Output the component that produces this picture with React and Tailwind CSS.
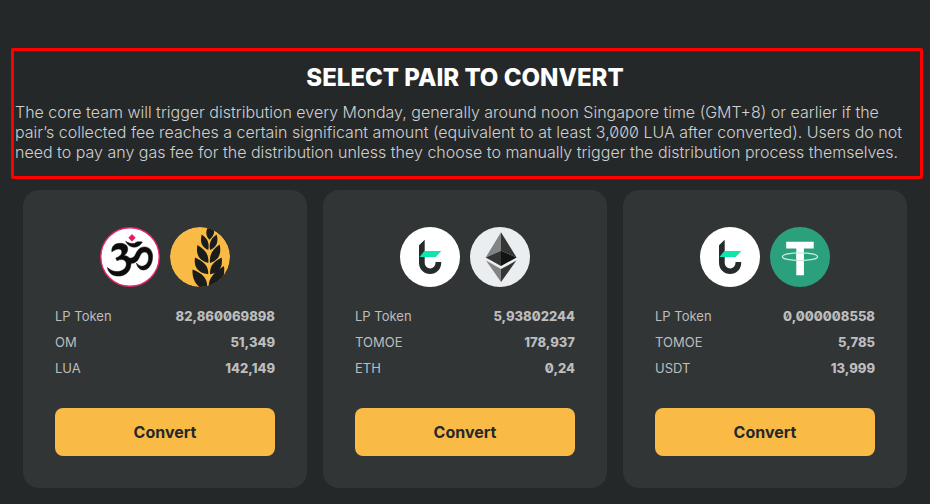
import React from 'react';

function OmIcon() {
  return (
    <svg viewBox="0 0 60 60" className="size-[60px]" role="img" aria-label="OM">
      <circle cx="30" cy="30" r="29.2" fill="#fff" stroke="#e8266f" strokeWidth="1.400" />
      <path d="M32 7.400l3.300 3.300-3.300 3.600-3.300-3.600z" fill="#e5195f" stroke="#e5195f" strokeWidth=".6" />
      <g fill="#0c0c0c" stroke="#0c0c0c" strokeWidth=".5">
        <path d="M25.600 14.300c3 1.900 6 2.600 9 2.200 1.400-1.600 3-2.100 7.800-1.500-1.800 3-4.700 5.300-8.200 5.200-3.800-.1-6.800-2.200-8.600-5.900z" />
        <path d="M11.800 24.800c-.4-5 2.400-8.400 8-8.500 5-.1 8 2.200 7.900 5.900-.1 2.800-1.500 4.900-3.900 6.300 5 .3 7.500 3.600 7.200 8.500-.5 7.300-5.400 12.100-12.700 12.100-5.600 0-9.600-2.800-11-8.600 3.500 3.300 7 4.300 10.600 4 5-.4 8.300-3.300 8.400-7.200.1-3.100-1.800-4.700-5-4.700-1.600 0-2.900.4-4.400 1.100l-1.100-2.700c3.800-1.400 6-3.500 6-6.100 0-1.700-1.200-2.900-3.200-2.800-2.600.1-4.100 1.200-6.800 2.700z" />
        <path d="M29 31c3.600.7 5.300-1 6.700-4 1.900-4.300 4.600-7.100 8.700-7.100 5.300 0 8.400 4.400 8.200 10.100-.3 7.600-4.200 13-9 13-3.700 0-6.400-2.700-7.200-7 2.200 2.600 4.400 3.700 6.800 3.100 3.100-.8 5.400-3.800 5.400-8 0-3.800-1.500-6-4-6-2.500 0-3.900 2-5.200 5.100-1.900 4.500-5.400 7.300-10.400 5.500z" />
      </g>
    </svg>
  );
}

function LuaIcon() {
  return (
    <svg viewBox="0 0 60 60" className="size-[60px] rounded-full" role="img" aria-label="LUA">
      <circle cx="30" cy="30" r="30" fill="#fabb46" />
      <g fill="#1b1d1d">
        <path d="M37.500 1c-2 4-1.500 8 1.800 11.800C43.500 9.500 45 5.500 43.500 2z" />
        <path d="M31.700 7.500c-1.800 7-.5 12.500 6.600 15.500 1.500-7-1-12-6.600-15.500z" />
        <path d="M46.700 7.500c1.800 7 .5 12.500-6.600 15.500-1.500-7 1-12 6.600-15.500z" />
        <path d="M27.500 18c-1.800 8.500.8 15.500 10.800 18 .9-8.500-3.300-13.500-10.800-18z" />
        <path d="M49.700 17.500c1.800 9-.5 15.500-9.700 18.500-.9-8.500 2.500-13.500 9.700-18.500z" />
        <path d="M25 30.500c-1.500 9 2.500 15.500 13.300 16.800.3-8.800-5-13-13.300-16.800z" />
        <path d="M51.700 30.500c1.300 9-2 15.500-11.700 16.800-.3-8.800 4-13 11.700-16.800z" />
        <path d="M22.500 42.500c-.5 7.500 2 13.500 7 17.500h7.700c.3-9.500-5.700-14-14.700-17.500z" />
        <path d="M54 39c1 8-1 15.500-5.500 21h-9.800c-.3-9.500 6-15 15.300-21z" />
      </g>
    </svg>
  );
}

function TomoIcon() {
  return (
    <svg viewBox="0 0 60 60" className="size-[60px]" role="img" aria-label="TOMOE">
      <circle cx="30" cy="30" r="30" fill="#fff" />
      <path d="M19 18.300l5.700-5.500V36a5.400 5.400 0 0 0 10.800 0v-.9h5.700v.9A11.100 11.100 0 0 1 19 36z" fill="#262b2c" />
      <path d="M24.300 24h17l-5.500 6H19.500z" fill="#0ee6ad" />
    </svg>
  );
}

function EthIcon() {
  return (
    <svg viewBox="0 0 60 60" className="size-[60px]" role="img" aria-label="ETH">
      <circle cx="30" cy="30" r="30" fill="#ebeef0" />
      <path d="M31 5.300L15.700 30.500 31 23.700z" fill="#828384" />
      <path d="M31 5.300l15.600 25.200L31 23.700z" fill="#343535" />
      <path d="M15.700 30.500L31 23.700V39z" fill="#343535" />
      <path d="M46.600 30.500L31 23.700V39z" fill="#131313" />
      <path d="M16 33.600l15 8.500V55z" fill="#828384" />
      <path d="M46.400 33.600L31 42.100V55z" fill="#343535" />
    </svg>
  );
}

function UsdtIcon() {
  return (
    <svg viewBox="0 0 60 60" className="size-[60px]" role="img" aria-label="USDT">
      <circle cx="30" cy="30" r="30" fill="#2aa17c" />
      <path d="M16.200 14.800h27.500v6.700H33.900v26.700h-7.600V21.500H16.200z" fill="#fff" />
      <ellipse cx="30" cy="29.700" rx="17.600" ry="3.900" fill="none" stroke="#c9ebe0" strokeWidth="1.300" />
      <path d="M26.300 27h7.600v4.500h-7.600z" fill="#fff" />
    </svg>
  );
}

const pairs = [
  {
    icons: [OmIcon, LuaIcon],
    rows: [['LP Token', '82,860069898'], ['OM', '51,349'], ['LUA', '142,149']],
  },
  {
    icons: [TomoIcon, EthIcon],
    rows: [['LP Token', '5,93802244'], ['TOMOE', '178,937'], ['ETH', '0,24']],
  },
  {
    icons: [TomoIcon, UsdtIcon],
    rows: [['LP Token', '0,000008558'], ['TOMOE', '5,785'], ['USDT', '13,999']],
  },
];

function PairCard({ icons, rows }) {
  return (
    <article className="rounded-2xl bg-[#323536] px-8 pt-[37px] pb-8">
      <div className="flex justify-center gap-2.5">
        {icons.map((Icon, i) => (
          <Icon key={i} />
        ))}
      </div>
      <dl className="mt-4 text-[13px] leading-[26px] text-[#bdbdbd]">
        {rows.map(([label, value]) => (
          <div key={label} className="flex justify-between">
            <dt>{label}</dt>
            <dd className="font-extrabold slashed-zero">{value}</dd>
          </div>
        ))}
      </dl>
      <button
        type="button"
        className="mt-[27px] h-12 w-full rounded-lg bg-[#fabb46] text-base font-bold text-[#252829]"
      >
        Convert
      </button>
    </article>
  );
}

export default function App() {
  return (
    <main className="min-h-screen bg-[#252829] pt-12 pb-4 font-['Inter','Liberation_Sans',sans-serif]">
      <section className="mr-[7px] ml-[11px] rounded-xs border-3 border-[#ff0000] pt-[13px] pr-[5px] pb-3.5 pl-px">
        <h1 className="text-center text-2xl leading-7 font-extrabold text-white">SELECT PAIR TO CONVERT</h1>
        <p className="mt-2.5 text-base leading-5 font-light text-[#d0d0d0] slashed-zero">
          The core team will trigger distribution every Monday, generally around noon Singapore time (GMT+8) or earlier if the
          pair’s collected fee reaches a certain significant amount (equivalent to at least 3,000 LUA after converted). Users do not
          need to pay any gas fee for the distribution unless they choose to manually trigger the distribution process themselves.
        </p>
      </section>
      <div className="mt-[11px] grid grid-cols-3 gap-4 px-[23px]">
        {pairs.map((pair, i) => (
          <PairCard key={i} {...pair} />
        ))}
      </div>
    </main>
  );
}
